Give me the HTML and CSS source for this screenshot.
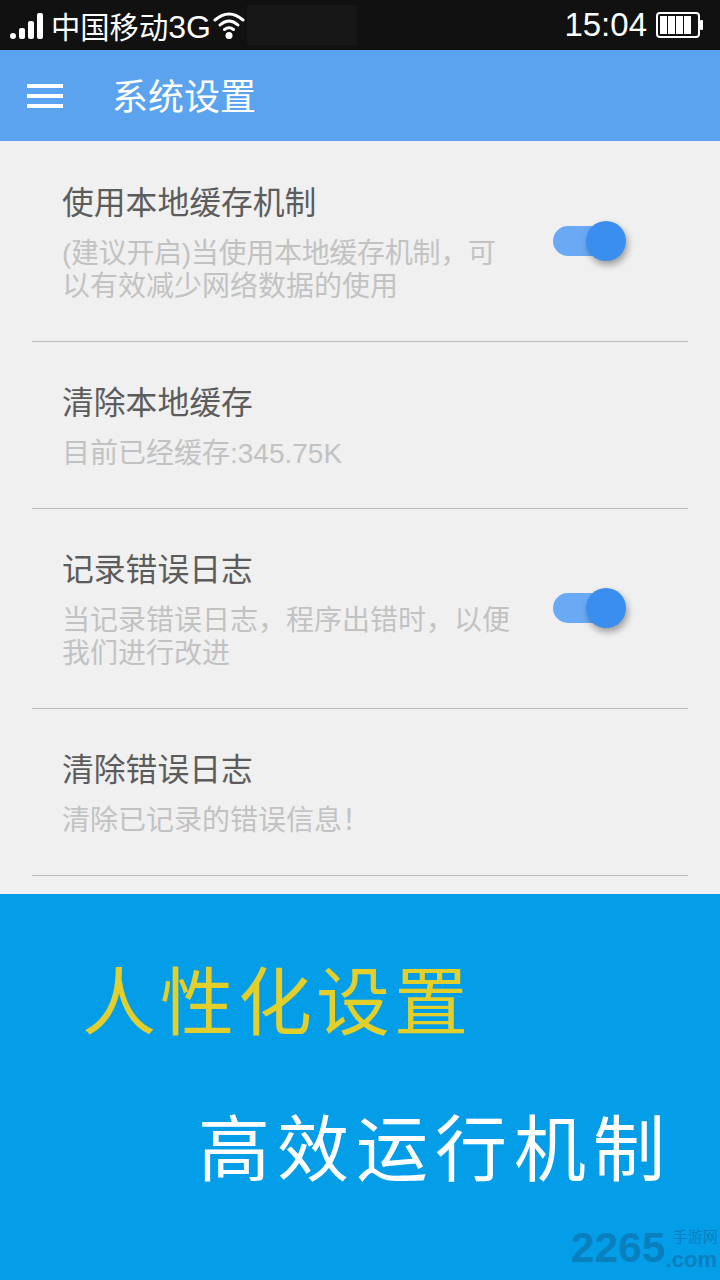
FILE: index.html
```html
<!DOCTYPE html>
<html lang="zh-CN">
  <head>
    <meta charset="UTF-8" />
    <meta name="viewport" content="width=device-width, initial-scale=1.0" />
    <title>系统设置</title>
    <link rel="stylesheet" href="styles.css">
  </head>
  <body>
    <div class="status">
      <svg class="signal" width="34" height="26" viewBox="0 0 34 26">
        <rect x="0" y="20" width="6" height="6" rx="3" fill="#fff" />
        <rect x="9" y="15" width="6" height="11" rx="2" fill="#fff" />
        <rect x="18" y="8" width="6" height="18" rx="2" fill="#fff" />
        <rect x="27" y="0" width="6" height="26" rx="2" fill="#fff" />
      </svg>
      <span class="carrier">中国移动<span class="carrier-3g">3G</span></span>
      <svg class="wifi" width="32" height="28" viewBox="0 0 32 28" fill="none" stroke="#fff" stroke-width="3" stroke-linecap="round">
        <path d="M2 9 Q16 -3 30 9" />
        <path d="M7 14 Q16 6 25 14" />
        <path d="M11.5 18.5 Q16 15 20.5 18.5" />
        <circle cx="16" cy="24.5" r="3.5" fill="#fff" stroke="none" />
      </svg>
      <div class="blackout"></div>
      <span class="time">15:04</span>
      <svg class="battery" width="48" height="26" viewBox="0 0 48 26">
        <rect x="1" y="1" width="42" height="24" rx="3" fill="none" stroke="#fff" stroke-width="2" />
        <rect x="44" y="8" width="3" height="10" rx="1" fill="#fff" />
        <rect x="4" y="4" width="7" height="18" fill="#fff" />
        <rect x="12" y="4" width="7" height="18" fill="#fff" />
        <rect x="20" y="4" width="7" height="18" fill="#fff" />
        <rect x="28" y="4" width="7" height="18" fill="#fff" />
      </svg>
    </div>

    <header class="appbar">
      <div class="menu-icon"><span></span><span></span><span></span></div>
      <h1>系统设置</h1>
    </header>

    <main class="settings">
      <section class="row">
        <div class="row-text">
          <h2>使用本地缓存机制</h2>
          <p class="tight">(建议开启)当使用本地缓存机制，可以有效减少网络数据的使用</p>
        </div>
        <div class="toggle"><div class="thumb"></div></div>
      </section>
      <section class="row">
        <div class="row-text">
          <h2>清除本地缓存</h2>
          <p>目前已经缓存:345.75K</p>
        </div>
      </section>
      <section class="row">
        <div class="row-text">
          <h2>记录错误日志</h2>
          <p>当记录错误日志，程序出错时，以便我们进行改进</p>
        </div>
        <div class="toggle"><div class="thumb"></div></div>
      </section>
      <section class="row">
        <div class="row-text">
          <h2>清除错误日志</h2>
          <p>清除已记录的错误信息！</p>
        </div>
      </section>
    </main>

    <footer class="banner">
      <div class="slogan slogan-yellow">人性化设置</div>
      <div class="slogan slogan-white">高效运行机制</div>
      <div class="watermark">
        <span class="wm-num">2265</span>
        <span class="wm-side"><span class="wm-cn">手游网</span><span class="wm-com">.com</span></span>
      </div>
    </footer>
  </body>
</html>
```

FILE: styles.css
```css
html,
body {
  margin: 0;
  padding: 0;
  font-family: "Liberation Sans", "Noto Sans CJK SC", sans-serif;
}

body {
  width: 720px;
  height: 1280px;
  overflow: hidden;
  background: #f0f0f0;
}

.status {
  display: flex;
  align-items: center;
  height: 50px;
  padding: 0 16px 0 10px;
  box-sizing: border-box;
  color: #fff;
  background: #111;
}

.signal {
  margin: 2px 7px 0 0;
}

.carrier {
  font-size: 29.3px;
}

.carrier-3g {
  font-size: 32px;
}

.wifi {
  margin: 0 0 0 2px;
}

.blackout {
  width: 110px;
  height: 40px;
  margin-left: 2px;
  background: #171717;
}

.time {
  margin-left: auto;
  margin-right: 9px;
  font-size: 33px;
}

.appbar {
  display: flex;
  align-items: center;
  height: 91px;
  padding-left: 27px;
  color: #fff;
  background: #5ca3ef;
}

.menu-icon {
  display: flex;
  flex-direction: column;
  gap: 6px;
  width: 36px;
}

.menu-icon span {
  height: 4px;
  background: #fff;
}

.appbar h1 {
  margin: 0 0 4px 49px;
  font-size: 36px;
  font-weight: 400;
}

.settings {
  height: 753px;
  padding: 1px 32px 0;
  box-sizing: border-box;
}

.row {
  display: flex;
  align-items: center;
  padding: 39px 0;
  border-bottom: 1px solid #bbb;
}

.row-text {
  width: 460px;
  padding-left: 30px;
}

.row-text h2 {
  margin: 1px 0 13px;
  font-size: 31.8px;
  font-weight: 400;
  line-height: 42px;
  color: #5c5c5c;
}

.row-text p {
  margin: 0 0 -1px;
  font-size: 28px;
  line-height: 33px;
  color: #c2c2c2;
}

.tight::first-line {
  letter-spacing: -0.3px;
}

.toggle {
  position: relative;
  width: 68px;
  height: 30px;
  margin: 0 0 2px 31px;
  border-radius: 15px;
  background: #6aaaf5;
}

.thumb {
  position: absolute;
  top: -5px;
  right: -5px;
  width: 40px;
  height: 40px;
  border-radius: 50%;
  background: #3a8eee;
  box-shadow: 2px 4px 7px rgba(0, 0, 0, 0.35);
}

.banner {
  position: relative;
  height: 386px;
  overflow: hidden;
  background: #039de8;
}

.slogan {
  line-height: 90px;
  white-space: nowrap;
}

.slogan-yellow {
  margin: 65px 0 0 82px;
  font-size: 74px;
  letter-spacing: 4px;
  color: #e2cf2c;
}

.slogan-white {
  margin: 56px 0 0 198px;
  font-size: 72px;
  letter-spacing: 7px;
  color: #fff;
}

.watermark {
  position: absolute;
  left: 571px;
  top: 332px;
  display: flex;
  color: #0a7fbe;
}

.wm-num {
  font-size: 42px;
  font-weight: 700;
  line-height: 44px;
  letter-spacing: 0.3px;
}

.wm-side {
  display: flex;
  flex-direction: column;
}

.wm-cn {
  padding-left: 7px;
  font-size: 15px;
  line-height: 22px;
  white-space: nowrap;
}

.wm-com {
  font-size: 22px;
  font-weight: 700;
  line-height: 24px;
}
```
